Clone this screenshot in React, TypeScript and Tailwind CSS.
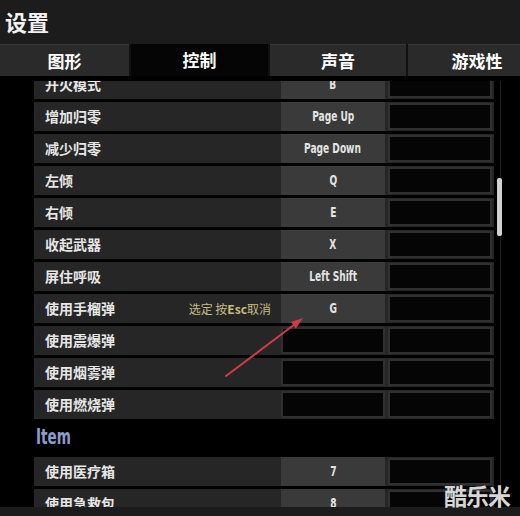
const cjk = "font-['Noto_Sans_CJK_SC','Noto_Sans',sans-serif]";
const narrow = "font-['DejaVu_Sans_Condensed','DejaVu_Sans',sans-serif]";

type Binding = { label: string; keyName?: string; hint?: boolean };

const combat: Binding[] = [
  { label: '开火模式', keyName: 'B' },
  { label: '增加归零', keyName: 'Page Up' },
  { label: '减少归零', keyName: 'Page Down' },
  { label: '左倾', keyName: 'Q' },
  { label: '右倾', keyName: 'E' },
  { label: '收起武器', keyName: 'X' },
  { label: '屏住呼吸', keyName: 'Left Shift' },
  { label: '使用手榴弹', keyName: 'G', hint: true },
  { label: '使用震爆弹' },
  { label: '使用烟雾弹' },
  { label: '使用燃烧弹' },
];

const items: Binding[] = [
  { label: '使用医疗箱', keyName: '7' },
  { label: '使用急救包', keyName: '8' },
];

const tabs = [
  { name: '图形', w: 'w-[129px]' },
  { name: '控制', w: 'w-[137px]', active: true },
  { name: '声音', w: 'w-[136px]' },
  { name: '游戏性', w: 'w-[138px]' },
];

function Row({ label, keyName, hint }: Binding) {
  return (
    <div className="flex h-[29px] shrink-0 bg-[#262626]">
      <div className={`flex flex-1 items-center pl-[11px] text-[14px] font-bold text-[#e6e6e6] ${cjk}`}>
        {label}
        {hint && (
          <span className="ml-auto mr-[10px] text-[12px] font-normal text-[#c4bd82]">
            选定 按<b className="font-bold">Esc</b>取消
          </span>
        )}
      </div>
      {keyName ? (
        <div className="flex w-[104px] items-center justify-center bg-[#3a3a3a] text-[#e4e4e4]">
          <span className={`inline-block scale-x-[0.72] text-[14px] font-bold ${narrow}`}>{keyName}</span>
        </div>
      ) : (
        <div className="my-[1px] w-[104px] border-2 border-[#303030] bg-[#050505]" />
      )}
      <div className="w-[3px]" />
      <div className="my-[1px] mr-[2px] w-[104px] border-2 border-[#303030] bg-[#050505]" />
    </div>
  );
}

export default function App() {
  return (
    <div className="relative flex h-[516px] w-[520px] flex-col overflow-hidden bg-black">
      {/* title bar */}
      <div className="h-[44px] shrink-0 bg-[#1c1c1c] pl-[5px] pt-[6px]">
        <h1 className={`text-[22px] font-bold leading-[30px] text-[#f2f2f2] ${cjk}`}>设置</h1>
      </div>

      {/* tabs */}
      <div className="flex h-[32px] shrink-0 gap-[2px] bg-[#111]">
        {tabs.map((t) => (
          <div
            key={t.name}
            className={`flex ${t.w} shrink-0 items-center justify-center text-[17px] font-bold text-white ${cjk} ${
              t.active ? 'bg-[#050505]' : 'border-t border-[#3a3a3a] bg-[#2a2a2a]'
            }`}
          >
            {t.name}
          </div>
        ))}
      </div>

      {/* list + scrollbar */}
      <div className="mt-[5px] flex min-h-0 flex-1 overflow-hidden">
        <div className="ml-[34px] flex w-[460px] shrink-0 flex-col gap-[3px] -mt-[11px]">
          {combat.map((r) => (
            <Row key={r.label} {...r} />
          ))}
          <div className="flex h-[32px] shrink-0 items-center pl-[2px] text-[#8c9ccc]">
            <span className={`inline-block origin-left scale-x-[0.72] text-[21px] font-bold ${narrow}`}>Item</span>
          </div>
          {items.map((r) => (
            <Row key={r.label} {...r} />
          ))}
        </div>
        <div className="relative ml-[3px] w-[6px]">
          <div className="absolute left-[3px] top-0 h-full w-px bg-[#1e1e1e]" />
          <div className="relative mt-[97px] h-[58px] w-[5px] rounded-[2px] bg-[#d2d2d2]" />
        </div>
      </div>

      {/* bottom strip */}
      <div className="h-[9px] shrink-0 bg-[#1c1c1c]" />

      {/* annotation arrow */}
      <svg className="pointer-events-none absolute left-0 top-0" width="520" height="516" viewBox="0 0 520 516">
        <line x1="226" y1="376" x2="295" y2="324" stroke="#d23a48" strokeWidth="2" strokeLinecap="round" />
        <polygon points="303,318 295.8,328.4 291,322" fill="#d23a48" />
      </svg>

      {/* watermark */}
      <div className={`pointer-events-none absolute left-[444px] top-[478px] text-[23px] font-bold tracking-[-1px] text-[#d6d6d6] ${cjk}`}>
        酷乐米
      </div>
    </div>
  );
}
